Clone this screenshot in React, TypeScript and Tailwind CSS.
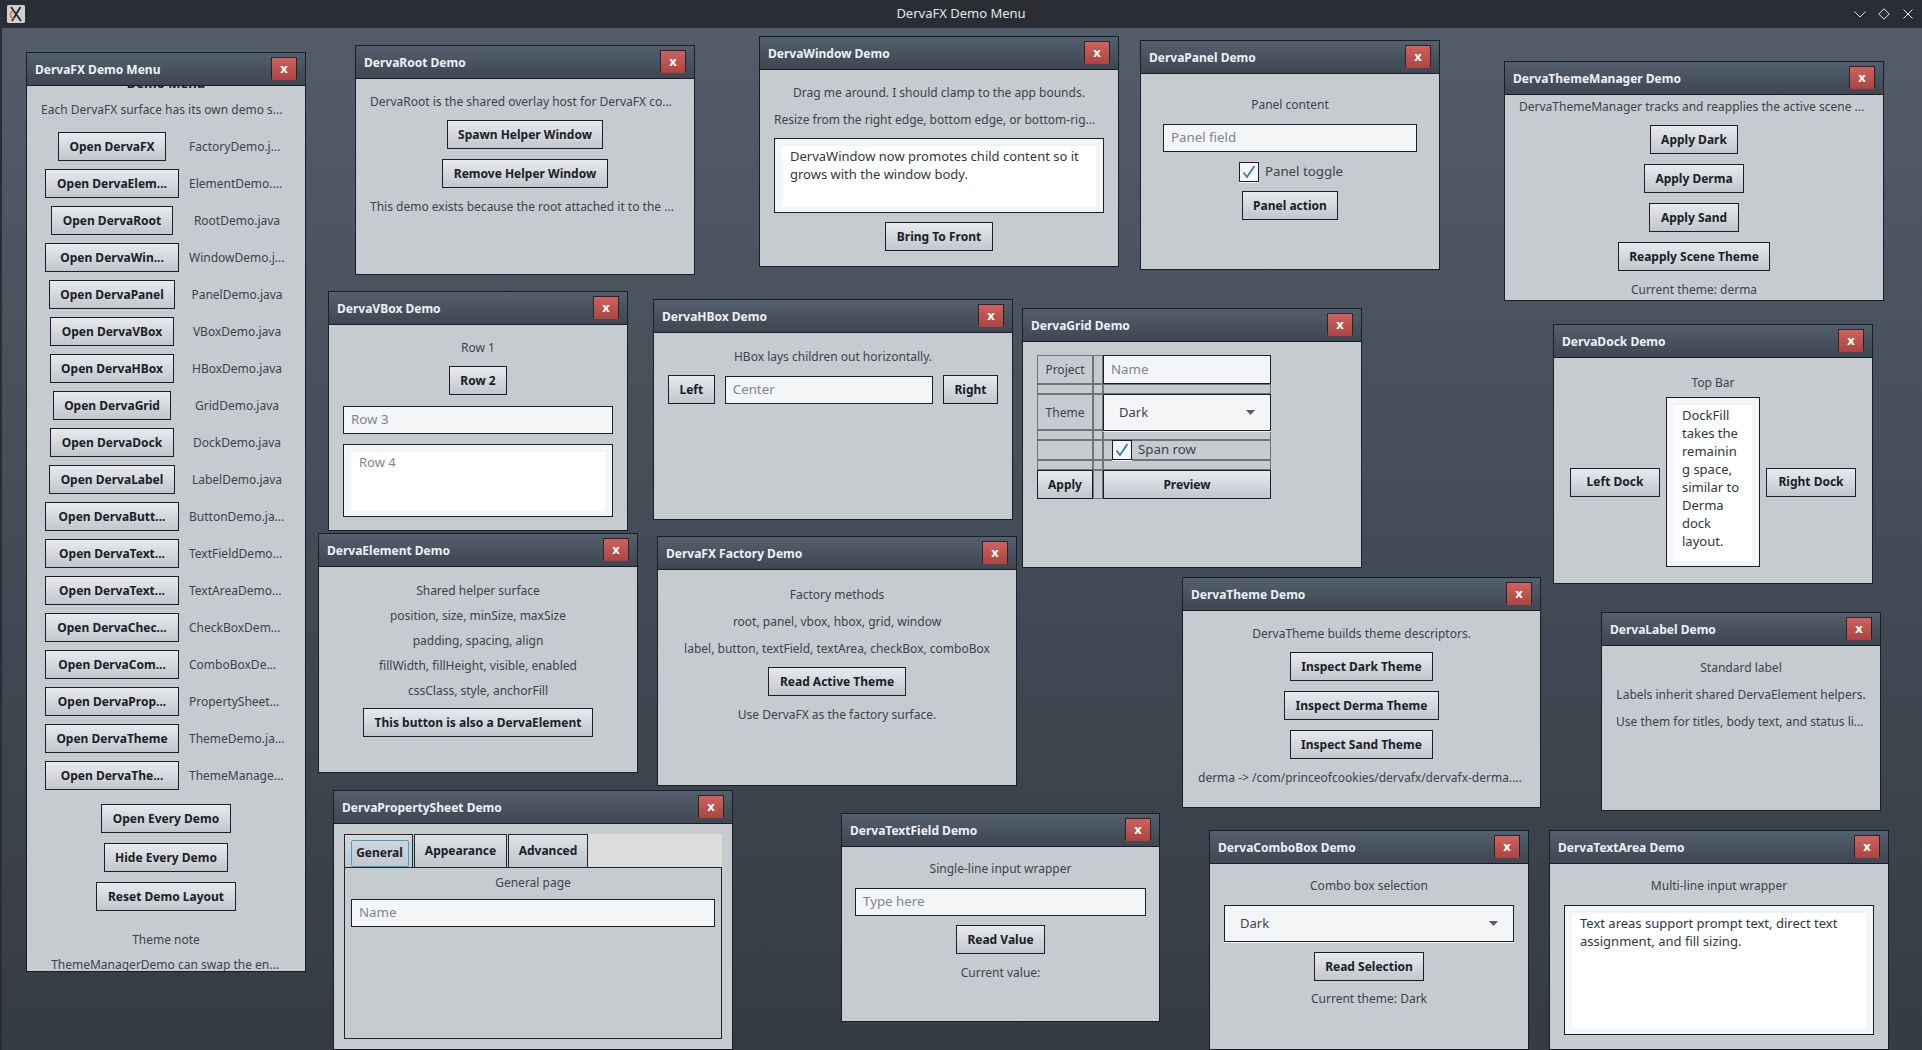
import type { ReactNode } from "react";

type WinProps = {
  title: string;
  frame: string;
  body: string;
  children?: ReactNode;
};

function Win({ title, frame, body, children }: WinProps) {
  return (
    <section className={`absolute flex flex-col border border-[#1a1e25] bg-[#c6cbcf] ${frame}`}>
      <header className="flex h-[33px] shrink-0 items-center justify-between border-b border-[#1a1e25] bg-linear-to-b from-[#53606d] to-[#3e4752] pr-[8px] pl-[8px]">
        <span className="pt-[1px] text-[12px] font-bold text-[#eef1f4]">{title}</span>
        <span className="mt-[-1px] flex h-[23px] w-[26px] items-center justify-center border border-[#23272d] border-b-[#b8403c] bg-linear-to-b from-[#cf625e] to-[#ab4743] text-[13px] font-bold text-white">
          x
        </span>
      </header>
      <div className={`flex min-h-0 flex-1 flex-col items-center overflow-hidden ${body}`}>{children}</div>
    </section>
  );
}

function Btn({ children, className = "" }: { children: ReactNode; className?: string }) {
  return (
    <button
      type="button"
      className={`flex h-[29px] shrink-0 items-center justify-center border border-[#1c2026] bg-linear-to-b from-[#e8eaed] to-[#c1c7ce] px-[10.5px] text-[12px] font-bold whitespace-nowrap text-[#1b2027] ${className}`}
    >
      {children}
    </button>
  );
}

function Txt({ children, className = "" }: { children: ReactNode; className?: string }) {
  return <p className={`shrink-0 text-center text-[12px] leading-[18px] whitespace-nowrap text-[#3a4350] ${className}`}>{children}</p>;
}

function Field({ placeholder, className = "" }: { placeholder: string; className?: string }) {
  return (
    <div className={`flex h-[28px] shrink-0 items-center border border-[#1c2026] bg-[#f4f5f7] px-[7px] text-[13.300px] text-[#7d8690] ${className}`}>
      {placeholder}
    </div>
  );
}

function Area({ children, muted, className = "" }: { children: ReactNode; muted?: boolean; className?: string }) {
  return (
    <div className={`flex shrink-0 border border-[#1c2026] bg-[#f4f5f7] px-[7px] py-[5px] ${className}`}>
      <div
        className={`flex-1 rounded-[2px] border-t-[2px] border-[#f1f2f4] bg-white pt-[1px] pl-[8px] text-[13px] leading-[18px] ${muted ? "text-[#7d8690]" : "text-[#2d3744]"}`}
      >
        {children}
      </div>
    </div>
  );
}

function Combo({ className = "" }: { className?: string }) {
  return (
    <div className={`flex h-[37px] shrink-0 items-center justify-between border border-[#1c2026] bg-[#f4f5f7] pr-[15px] pl-[15px] text-[13px] text-[#3a4350] shadow-[0_1px_0_#f4f5f7] ${className}`}>
      Dark
      <svg width="9" height="5" viewBox="0 0 9 5">
        <path d="M0 0h9L4.500 5z" fill="#565c64" />
      </svg>
    </div>
  );
}

function Check({ label, className = "" }: { label: string; className?: string }) {
  return (
    <div className={`flex h-[20px] shrink-0 items-center gap-[6px] text-[13.300px] text-[#3a4350] ${className}`}>
      <span className="flex h-[20px] w-[20px] items-center justify-center border border-[#1c2026] bg-[#f4f5f7] shadow-[0_1px_0_#f4f5f7]">
        <svg width="16" height="16" viewBox="0 0 16 16">
          <path d="M2.500 8.500l3.500 4.500 7.500-11" fill="none" stroke="#3b78c4" strokeWidth="1.800" />
        </svg>
      </span>
      {label}
    </div>
  );
}

const menuRows = [
  ["Open DervaFX", "FactoryDemo.j..."],
  ["Open DervaElem...", "ElementDemo...."],
  ["Open DervaRoot", "RootDemo.java"],
  ["Open DervaWin...", "WindowDemo.j..."],
  ["Open DervaPanel", "PanelDemo.java"],
  ["Open DervaVBox", "VBoxDemo.java"],
  ["Open DervaHBox", "HBoxDemo.java"],
  ["Open DervaGrid", "GridDemo.java"],
  ["Open DervaDock", "DockDemo.java"],
  ["Open DervaLabel", "LabelDemo.java"],
  ["Open DervaButt...", "ButtonDemo.ja..."],
  ["Open DervaText...", "TextFieldDemo..."],
  ["Open DervaText...", "TextAreaDemo..."],
  ["Open DervaChec...", "CheckBoxDem..."],
  ["Open DervaCom...", "ComboBoxDe..."],
  ["Open DervaProp...", "PropertySheet..."],
  ["Open DervaTheme", "ThemeDemo.ja..."],
  ["Open DervaThe...", "ThemeManage..."],
];

const wideButtons = ["Open DervaElem...", "Open DervaWin...", "Open DervaButt...", "Open DervaText...", "Open DervaChec...", "Open DervaCom...", "Open DervaProp...", "Open DervaTheme", "Open DervaThe..."];

const gridCells = [1, 2, 3, 4, 5, 6, 7].flatMap((row) => [1, 2, 3].map((col) => ({ row, col })));

function GridDemoBody() {
  return (
    <div className="grid grid-cols-[56px_10px_168px] grid-rows-[29px_10px_36px_10px_20px_10px_29px] self-start">
      {gridCells.map((cell) => (
        <div
          key={`${cell.row}-${cell.col}`}
          className="border border-[#6f7479]"
          style={{ gridRow: cell.row, gridColumn: cell.col }}
        />
      ))}
      <span className="col-start-1 row-start-1 self-center pt-[1px] text-center text-[12px] text-[#3a4350]">Project</span>
      <Field placeholder="Name" className="col-start-3 row-start-1 h-[29px] pt-[1px]" />
      <span className="col-start-1 row-start-3 self-center pt-[1px] text-center text-[12px] text-[#3a4350]">Theme</span>
      <Combo className="col-start-3 row-start-3 h-[36px]" />
      <Check label="Span row" className="col-start-3 row-start-5 ml-[9px]" />
      <Btn className="col-start-1 row-start-7 px-0">Apply</Btn>
      <Btn className="col-start-3 row-start-7">Preview</Btn>
    </div>
  );
}

export default function App() {
  return (
    <div className="flex h-[1050px] w-full flex-col overflow-hidden bg-[#2a2d33] font-['Noto_Sans',sans-serif]">
      <div className="relative flex h-[28px] shrink-0 items-center justify-center text-[13px] text-[#e4e6e9]">
        <svg className="absolute top-[5px] left-[7px]" width="18" height="18" viewBox="0 0 18 18">
          <rect width="18" height="18" rx="1.500" fill="#cfd0d2" />
          <path d="M4 2l10 14M13.500 2L5 16" stroke="#26282c" strokeWidth="1.800" fill="none" />
          <path d="M6 5.500C2.500 8 2.500 13 7 13.500" stroke="#d9762a" strokeWidth="1.500" fill="none" />
        </svg>
        DervaFX Demo Menu
        <div className="absolute top-0 right-[8px] flex h-[28px] items-center gap-[12px]">
          <svg width="12" height="12" viewBox="0 0 12 12">
            <path d="M0.500 3.500L6 9l5.500-5.500" fill="none" stroke="#e6e8ea" strokeWidth="1" />
          </svg>
          <svg width="12" height="12" viewBox="0 0 12 12">
            <path d="M6 0.800L11.200 6 6 11.200 0.800 6z" fill="none" stroke="#e6e8ea" strokeWidth="1" />
          </svg>
          <svg width="12" height="12" viewBox="0 0 12 12">
            <path d="M1.500 1.500l9 9M10.500 1.500l-9 9" fill="none" stroke="#e6e8ea" strokeWidth="1" />
          </svg>
        </div>
      </div>

      <main className="relative flex-1 bg-linear-to-b from-[#525d69] to-[#343b44]">
        <div className="absolute inset-y-0 left-0 w-[2px] bg-[#2a2d33]" />

        <Win title="DervaFX Demo Menu" frame="left-[26px] top-[24px] h-[920px] w-[280px]" body="">
          <p className="mt-[-12px] shrink-0 text-[13px] leading-[18px] font-bold text-[#1b2027]">Demo Menu</p>
          <Txt className="mt-[9px] self-start pl-[14px]">Each DervaFX surface has its own demo s...</Txt>
          <div className="mt-[13px] flex flex-col gap-[8px] self-start pl-[18px]">
            {menuRows.map(([open, file], index) => (
              <div key={index} className="grid grid-cols-[134px_96px] items-center gap-x-[10px]">
                <Btn className={`justify-self-center ${wideButtons.includes(open) ? "w-[134px]" : ""}`}>{open}</Btn>
                <Txt className={file.endsWith("...") || file.endsWith("....") ? "text-left" : ""}>{file}</Txt>
              </div>
            ))}
          </div>
          <div className="mt-[14px] flex flex-col items-center gap-[10px]">
            <Btn>Open Every Demo</Btn>
            <Btn>Hide Every Demo</Btn>
            <Btn>Reset Demo Layout</Btn>
          </div>
          <Txt className="mt-[20px]">Theme note</Txt>
          <Txt className="mt-[7px] mr-[2px]">ThemeManagerDemo can swap the en...</Txt>
        </Win>

        <Win title="DervaRoot Demo" frame="left-[355px] top-[17px] h-[230px] w-[340px]" body="gap-[10px] pt-[14px]">
          <Txt className="self-start pl-[14px]">DervaRoot is the shared overlay host for DervaFX co...</Txt>
          <Btn className="mt-[-1px]">Spawn Helper Window</Btn>
          <Btn>Remove Helper Window</Btn>
          <Txt className="self-start pl-[14px]">This demo exists because the root attached it to the ...</Txt>
        </Win>

        <Win title="DervaWindow Demo" frame="left-[759px] top-[8px] h-[231px] w-[360px]" body="gap-[9px] pt-[14px]">
          <Txt>Drag me around. I should clamp to the app bounds.</Txt>
          <Txt className="self-start pl-[14px]">Resize from the right edge, bottom edge, or bottom-rig...</Txt>
          <Area className="h-[75px] w-[330px]">
            DervaWindow now promotes child content so it
            <br />
            grows with the window body.
          </Area>
          <Btn>Bring To Front</Btn>
        </Win>

        <Win title="DervaPanel Demo" frame="left-[1140px] top-[12px] h-[230px] w-[300px]" body="pt-[22px]">
          <Txt>Panel content</Txt>
          <Field placeholder="Panel field" className="mt-[10px] w-[254px]" />
          <Check label="Panel toggle" className="mt-[10px] ml-[2px]" />
          <Btn className="mt-[9px]">Panel action</Btn>
        </Win>

        <Win title="DervaThemeManager Demo" frame="left-[1504px] top-[33px] h-[240px] w-[380px]" body="gap-[10px] pt-[3px]">
          <Txt className="self-start pl-[14px]">DervaThemeManager tracks and reapplies the active scene ...</Txt>
          <Btn className="mt-[-1px]">Apply Dark</Btn>
          <Btn>Apply Derma</Btn>
          <Btn>Apply Sand</Btn>
          <Btn>Reapply Scene Theme</Btn>
          <Txt>Current theme: derma</Txt>
        </Win>

        <Win title="DervaVBox Demo" frame="left-[328px] top-[263px] h-[240px] w-[300px]" body="gap-[10px] px-[14px] pt-[14px]">
          <Txt>Row 1</Txt>
          <Btn className="mt-[-1px]">Row 2</Btn>
          <Field placeholder="Row 3" className="mt-[1px] w-full" />
          <Area muted className="h-[73px] w-full">
            Row 4
          </Area>
        </Win>

        <Win title="DervaHBox Demo" frame="left-[653px] top-[271px] h-[221px] w-[360px]" body="gap-[9px] px-[14px] pt-[15px]">
          <Txt>HBox lays children out horizontally.</Txt>
          <div className="flex w-full items-center gap-[10px]">
            <Btn>Left</Btn>
            <Field placeholder="Center" className="flex-1" />
            <Btn>Right</Btn>
          </div>
        </Win>

        <Win title="DervaGrid Demo" frame="left-[1022px] top-[280px] h-[260px] w-[340px]" body="pt-[13px] pl-[14px]">
          <GridDemoBody />
        </Win>

        <Win title="DervaDock Demo" frame="left-[1553px] top-[296px] h-[260px] w-[320px]" body="gap-[5px] pt-[16px]">
          <Txt>Top Bar</Txt>
          <div className="flex items-center gap-[6px]">
            <Btn className="w-[90px]">Left Dock</Btn>
            <Area className="h-[170px] w-[94px]">
              DockFill
              <br />
              takes the
              <br />
              remainin
              <br />g space,
              <br />
              similar to
              <br />
              Derma
              <br />
              dock
              <br />
              layout.
            </Area>
            <Btn className="w-[90px]">Right Dock</Btn>
          </div>
        </Win>

        <Win title="DervaElement Demo" frame="left-[318px] top-[505px] h-[240px] w-[320px]" body="gap-[7px] pt-[15px]">
          <Txt>Shared helper surface</Txt>
          <Txt>position, size, minSize, maxSize</Txt>
          <Txt>padding, spacing, align</Txt>
          <Txt>fillWidth, fillHeight, visible, enabled</Txt>
          <Txt>cssClass, style, anchorFill</Txt>
          <Btn className="mt-[1px]">This button is also a DervaElement</Btn>
        </Win>

        <Win title="DervaFX Factory Demo" frame="left-[657px] top-[508px] h-[250px] w-[360px]" body="gap-[9px] pt-[16px]">
          <Txt>Factory methods</Txt>
          <Txt>root, panel, vbox, hbox, grid, window</Txt>
          <Txt>label, button, textField, textArea, checkBox, comboBox</Txt>
          <Btn>Read Active Theme</Btn>
          <Txt className="mt-[1px]">Use DervaFX as the factory surface.</Txt>
        </Win>

        <Win title="DervaTheme Demo" frame="left-[1182px] top-[549px] h-[231px] w-[359px]" body="gap-[10px] pt-[14px]">
          <Txt>DervaTheme builds theme descriptors.</Txt>
          <Btn className="mt-[-1px]">Inspect Dark Theme</Btn>
          <Btn>Inspect Derma Theme</Btn>
          <Btn>Inspect Sand Theme</Btn>
          <Txt className="self-start pl-[15px]">derma -&gt; /com/princeofcookies/dervafx/dervafx-derma....</Txt>
        </Win>

        <Win title="DervaLabel Demo" frame="left-[1601px] top-[584px] h-[199px] w-[280px]" body="gap-[9px] pt-[13px]">
          <Txt>Standard label</Txt>
          <Txt>Labels inherit shared DervaElement helpers.</Txt>
          <Txt className="self-start pl-[14px]">Use them for titles, body text, and status li...</Txt>
        </Win>

        <Win title="DervaPropertySheet Demo" frame="left-[333px] top-[762px] h-[260px] w-[400px]" body="px-[10px] pt-[10px]">
          <div className="flex h-[33px] w-full shrink-0 items-stretch bg-[#c6cbcf]">
            <button
              type="button"
              className="flex w-[69px] items-center justify-center border border-b-0 border-[#22262c] bg-linear-to-b from-[#d5d9dd] to-[#c1c7ce] pt-[4px] pl-[2px]"
            >
              <span className="flex h-[27px] w-[58px] items-center justify-center rounded-[2px] border border-[#2ea7dc] pb-[1px] text-[12px] font-bold text-[#1b2027]">
                General
              </span>
            </button>
            <button
              type="button"
              className="ml-[1px] w-[93px] border border-b-0 border-[#22262c] bg-linear-to-b from-[#dfe2e5] to-[#bfc5cc] text-[12px] font-bold text-[#1b2027]"
            >
              Appearance
            </button>
            <button
              type="button"
              className="ml-[1px] w-[80px] border border-b-0 border-[#22262c] bg-linear-to-b from-[#dfe2e5] to-[#bfc5cc] text-[12px] font-bold text-[#1b2027]"
            >
              Advanced
            </button>
            <div className="flex-1 bg-[#dcdcdc]" />
          </div>
          <div className="flex h-[172px] w-full shrink-0 flex-col items-center gap-[7px] border border-[#22262c] px-[6px] pt-[6px]">
            <Txt>General page</Txt>
            <Field placeholder="Name" className="w-full" />
          </div>
        </Win>

        <Win title="DervaTextField Demo" frame="left-[841px] top-[785px] h-[209px] w-[319px]" body="gap-[10px] px-[13px] pt-[13px]">
          <Txt>Single-line input wrapper</Txt>
          <Field placeholder="Type here" className="w-full" />
          <Btn className="mt-[-1px]">Read Value</Btn>
          <Txt>Current value:</Txt>
        </Win>

        <Win title="DervaComboBox Demo" frame="left-[1209px] top-[802px] h-[220px] w-[320px]" body="gap-[10px] px-[14px] pt-[13px]">
          <Txt>Combo box selection</Txt>
          <Combo className="w-full" />
          <Btn>Read Selection</Btn>
          <Txt className="mt-[-1px]">Current theme: Dark</Txt>
        </Win>

        <Win title="DervaTextArea Demo" frame="left-[1549px] top-[802px] h-[220px] w-[340px]" body="gap-[10px] px-[14px] pt-[13px]">
          <Txt>Multi-line input wrapper</Txt>
          <Area className="h-[130px] w-full">
            Text areas support prompt text, direct text
            <br />
            assignment, and fill sizing.
          </Area>
        </Win>
      </main>
    </div>
  );
}
